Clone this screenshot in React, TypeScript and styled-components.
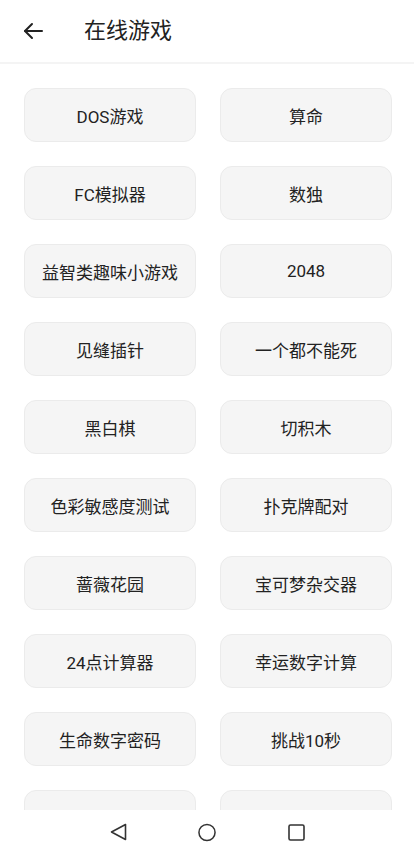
import React from "react";
import styled, { createGlobalStyle } from "styled-components";

const Global = createGlobalStyle`
  html, body { margin: 0; padding: 0; background: #fff; }
  * { box-sizing: border-box; }
  body { font-family: Roboto, "Noto Sans CJK SC", sans-serif; }
`;

const Page = styled.div`
  width: 414px;
  height: 854px;
  display: flex;
  flex-direction: column;
  overflow: hidden;
  background: #fff;
`;

const Header = styled.div`
  height: 64px;
  flex-shrink: 0;
  display: flex;
  align-items: center;
  padding-left: 22px;
  border-bottom: 2px solid #f4f4f4;
`;

const BackButton = styled.div`
  width: 22px;
  height: 22px;
  display: flex;
  align-items: center;
  justify-content: center;
  margin-right: 40px;
`;

const Title = styled.div`
  font-size: 22px;
  color: #222;
  line-height: 1;
  margin-top: -1px;
`;

const Content = styled.div`
  flex: 1;
  overflow: hidden;
  padding: 24px 22px 0 24px;
`;

const Grid = styled.div`
  display: grid;
  grid-template-columns: 172px 172px;
  column-gap: 24px;
  row-gap: 24px;
`;

const Card = styled.div`
  height: 54px;
  border-radius: 12px;
  background: #f5f5f5;
  border: 1px solid #ebebeb;
  display: flex;
  align-items: center;
  justify-content: center;
  font-size: 17px;
  color: #222;
`;

const NavBar = styled.div`
  height: 44px;
  flex-shrink: 0;
  background: #fff;
  display: flex;
  align-items: center;
  justify-content: center;
  gap: 71px;
`;

const NavIcon = styled.div`
  width: 18px;
  height: 18px;
  display: flex;
  align-items: center;
  justify-content: center;
`;

const items = [
  "DOS游戏", "算命",
  "FC模拟器", "数独",
  "益智类趣味小游戏", "2048",
  "见缝插针", "一个都不能死",
  "黑白棋", "切积木",
  "色彩敏感度测试", "扑克牌配对",
  "蔷薇花园", "宝可梦杂交器",
  "24点计算器", "幸运数字计算",
  "生命数字密码", "挑战10秒",
  "", "",
];

export default function App() {
  return (
    <Page>
      <Global />
      <Header>
        <BackButton>
          <svg width="20" height="18" viewBox="0 0 20 18" fill="none" stroke="#222" strokeWidth="2" strokeLinecap="round" strokeLinejoin="round">
            <path d="M19 9H2" />
            <path d="M9 2L2 9l7 7" />
          </svg>
        </BackButton>
        <Title>在线游戏</Title>
      </Header>
      <Content>
        <Grid>
          {items.map((t, i) => (
            <Card key={i}>{t}</Card>
          ))}
        </Grid>
      </Content>
      <NavBar>
        <NavIcon>
          <svg width="17" height="18" viewBox="0 0 17 18" fill="none" stroke="#333" strokeWidth="1.6" strokeLinejoin="round">
            <path d="M15.5 1.5v15L1.5 9z" />
          </svg>
        </NavIcon>
        <NavIcon>
          <svg width="19" height="19" viewBox="0 0 19 19" fill="none" stroke="#333" strokeWidth="1.6">
            <circle cx="9.5" cy="9.5" r="8.5" />
          </svg>
        </NavIcon>
        <NavIcon>
          <svg width="17" height="17" viewBox="0 0 17 17" fill="none" stroke="#333" strokeWidth="1.6">
            <rect x="1" y="1" width="15" height="15" rx="1.5" />
          </svg>
        </NavIcon>
      </NavBar>
    </Page>
  );
}
